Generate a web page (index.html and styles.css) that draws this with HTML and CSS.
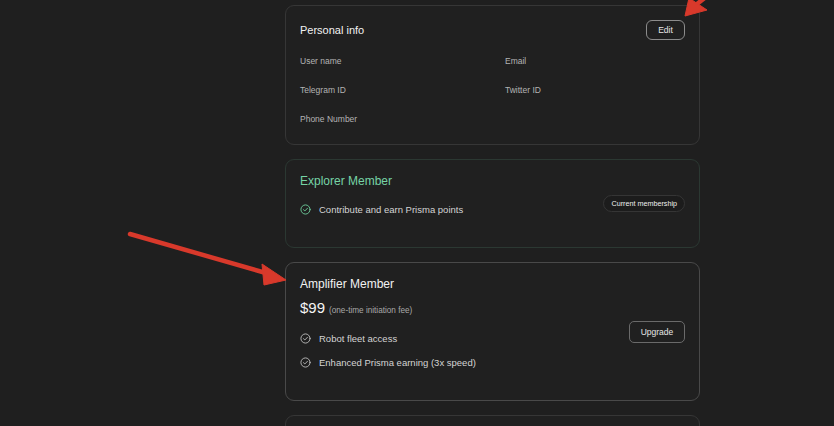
FILE: index.html
```html
<!DOCTYPE html>
<html>
<head>
<meta charset="utf-8">
<link rel="stylesheet" href="styles.css">
</head>
<body>
<div class="page">
  <main class="column">
    <section class="card card-info">
      <div class="info-head">
        <h2 class="card-title title-sm">Personal info</h2>
        <button class="btn btn-edit">Edit</button>
      </div>
      <div class="info-grid">
        <div class="label">User name</div>
        <div class="label">Email</div>
        <div class="label">Telegram ID</div>
        <div class="label">Twitter ID</div>
        <div class="label">Phone Number</div>
      </div>
    </section>

    <section class="card card-explorer">
      <div class="plan-body">
        <h2 class="card-title green">Explorer Member</h2>
        <ul class="features">
          <li class="feature">
            <svg class="check green-stroke" viewBox="0 0 12 12"><circle cx="6" cy="6" r="5"/><path d="M3.8 6.2 L5.3 7.6 L8.2 4.6"/></svg>
            <span>Contribute and earn Prisma points</span>
          </li>
        </ul>
      </div>
      <span class="pill">Current membership</span>
    </section>

    <section class="card card-amplifier">
      <div class="plan-body">
        <h2 class="card-title">Amplifier Member</h2>
        <div class="price"><span class="amount">$99</span><span class="fee">(one-time initiation fee)</span></div>
        <ul class="features">
          <li class="feature">
            <svg class="check" viewBox="0 0 12 12"><circle cx="6" cy="6" r="5"/><path d="M3.8 6.2 L5.3 7.6 L8.2 4.6"/></svg>
            <span>Robot fleet access</span>
          </li>
          <li class="feature">
            <svg class="check" viewBox="0 0 12 12"><circle cx="6" cy="6" r="5"/><path d="M3.8 6.2 L5.3 7.6 L8.2 4.6"/></svg>
            <span>Enhanced Prisma earning (3x speed)</span>
          </li>
        </ul>
      </div>
      <button class="btn btn-upgrade">Upgrade</button>
    </section>

    <section class="card card-next"></section>
  </main>
</div>

<svg class="arrows" viewBox="0 0 834 426" width="834" height="426">
  <g fill="#d8392b" stroke="#d8392b">
    <line x1="740" y1="-30" x2="697" y2="4" stroke-width="4.5" stroke-linecap="round"/>
    <polygon points="685,16 689,-2 707,10" stroke-width="1" stroke-linejoin="round"/>
    <line x1="130" y1="234" x2="266" y2="273" stroke-width="4.5" stroke-linecap="round"/>
    <polygon points="286,280 262,264 264,285" stroke-width="1" stroke-linejoin="round"/>
  </g>
</svg>
</body>
</html>
```

FILE: styles.css
```css
* { box-sizing: border-box; }

html, body {
  margin: 0;
  padding: 0;
  background: #1f1f1f;
}

body {
  font-family: "Liberation Sans", Arial, sans-serif;
  color: #e8e8e8;
  width: 834px;
  height: 426px;
  overflow: hidden;
  position: relative;
}

.page {
  display: flex;
  padding-top: 5px;
  padding-left: 285px;
}

.column {
  width: 415px;
  display: flex;
  flex-direction: column;
  gap: 14px;
}

.card {
  border: 1px solid #363636;
  border-radius: 9px;
  background: #202020;
}

.card-title {
  margin: 0;
  font-size: 12px;
  font-weight: normal;
  line-height: 16px;
  color: #f2f2f2;
}

.title-sm { font-size: 11px; }

.green { color: #76d3a6; }

/* personal info */
.card-info {
  padding: 14px 14px 19px 14px;
  height: 140px;
}

.info-head {
  display: flex;
  justify-content: space-between;
  align-items: center;
  height: 20px;
}

.btn {
  font-family: "Liberation Sans", Arial, sans-serif;
  background: transparent;
  color: #e6e6e6;
  font-size: 8.5px;
  padding: 0;
  cursor: pointer;
}

.btn-edit {
  width: 39px;
  height: 20px;
  border: 1px solid #8c8c8c;
  border-radius: 6px;
}

.info-grid {
  margin-top: 15px;
  display: grid;
  grid-template-columns: 205px 1fr;
  row-gap: 17px;
}

.label {
  font-size: 8.5px;
  line-height: 12px;
  color: #b4b4b4;
}

/* plans */
.card-explorer,
.card-amplifier {
  display: flex;
  align-items: center;
  justify-content: space-between;
  padding: 0 14px 0 14px;
}

.card-explorer {
  border-color: #2b3832;
  height: 89px;
}

.card-amplifier {
  border-color: #494949;
  height: 139px;
}

.plan-body {
  align-self: stretch;
  padding-top: 13px;
}

.features {
  list-style: none;
  margin: 0;
  padding: 0;
  display: flex;
  flex-direction: column;
  gap: 10px;
}

.card-explorer .features { margin-top: 13px; }
.card-amplifier .features { margin-top: 14px; }

.feature {
  display: flex;
  align-items: center;
  gap: 8px;
  height: 14px;
  font-size: 9.5px;
  color: #d4d4d4;
}

.check {
  width: 11px;
  height: 11px;
  fill: none;
  stroke: #bdbdbd;
  stroke-width: 1;
  stroke-linecap: round;
  stroke-linejoin: round;
}

.green-stroke { stroke: #6fcf9c; }

.pill {
  font-size: 7.2px;
  color: #f0f0f0;
  height: 17px;
  line-height: 15px;
  padding: 0 7px;
  border: 1px solid #353535;
  border-radius: 9px;
  background: #1c1c1c;
}

.price {
  margin-top: 7px;
  display: flex;
  align-items: baseline;
  gap: 4px;
  height: 18px;
}

.amount {
  font-size: 15px;
  color: #f4f4f4;
  line-height: 18px;
}

.fee {
  font-size: 8.2px;
  color: #a8a8a8;
}

.btn-upgrade {
  width: 56px;
  height: 22px;
  border: 1px solid #6a6a6a;
  border-radius: 5px;
}

.card-next {
  height: 100px;
  border-color: #363636;
}

.arrows {
  position: absolute;
  left: 0;
  top: 0;
  pointer-events: none;
}
```
